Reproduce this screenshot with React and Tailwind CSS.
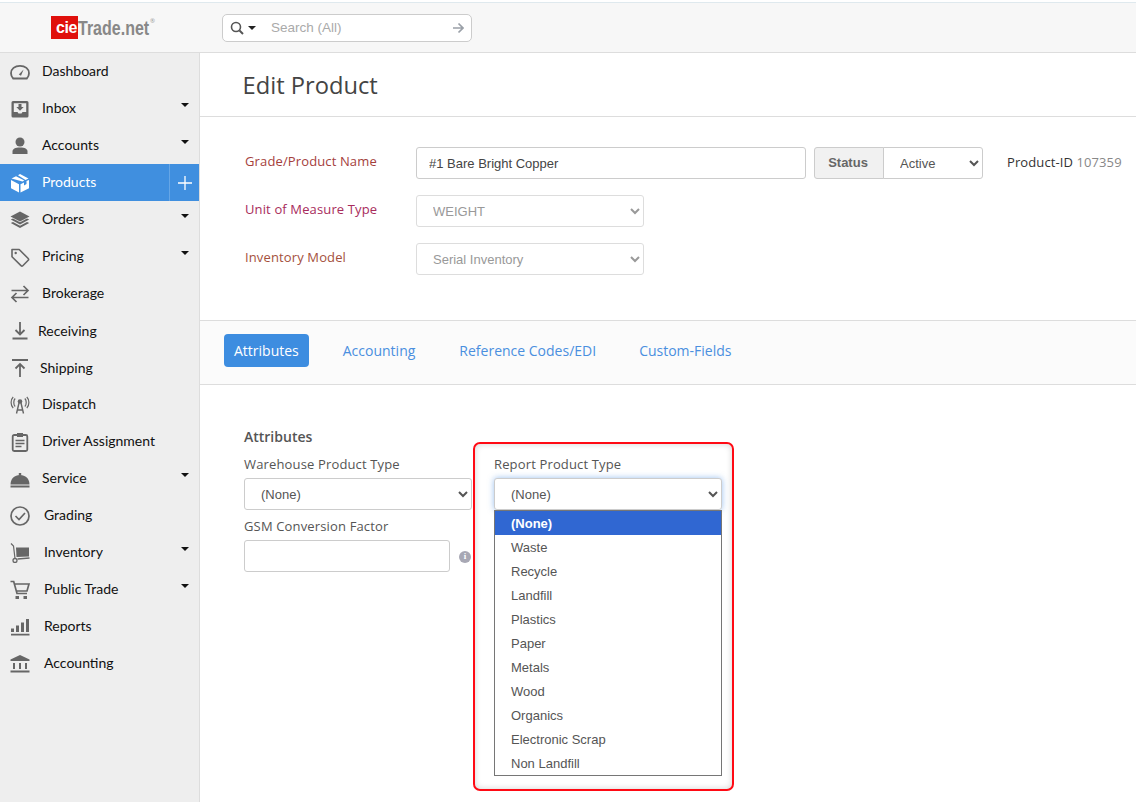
import React from "react";

const G = "#666666";
const Svg = ({ children }) => (
  <svg width="20" height="20" viewBox="0 0 20 20" fill="none" className="shrink-0">{children}</svg>
);
const icons = {
  dashboard: (
    <Svg>
      <path d="M3.2 16.5C1.900 15.200 1 13.300 1 11.200 1 7 4.800 3.800 10 3.800s9 3.200 9 7.400c0 2.100-.9 4-2.200 5.300z" stroke={G} strokeWidth="1.800" />
      <path d="M8.800 12.600 13.600 7.600 11 13.800z" fill={G} />
    </Svg>
  ),
  inbox: (
    <Svg>
      <path d="M3 2h14a1.500 1.500 0 0 1 1.500 1.500V17a1.500 1.500 0 0 1-1.500 1.500H3A1.500 1.500 0 0 1 1.500 17V3.500A1.500 1.500 0 0 1 3 2z" fill={G} />
      <path d="M3.800 4.300h12.400v8.700h-3.700l-1 1.500h-3l-1-1.500H3.800z" fill="#eeeeee" />
      <path d="M8.500 5h3v3h2.200L10 11.800 6.300 8h2.200z" fill={G} />
    </Svg>
  ),
  accounts: (
    <Svg>
      <circle cx="10" cy="6" r="4.500" fill={G} />
      <path d="M2.500 18v-2.500c0-2.500 2.500-4 7.500-4s7.500 1.500 7.500 4V18z" fill={G} />
    </Svg>
  ),
  products: (
    <Svg>
      <path d="M1.500 5.500 6 3.200l8.300 4.300-1.800 1zM8 2.200 10 1l8.500 4.500-3 1.500zM1 7l8 4.200V19.500L1 15.200zM19 7v8.200l-8.500 4.300v-8.300l3.500-1.800v3l2.500-1.300v-3z" fill="#ffffff" />
    </Svg>
  ),
  orders: (
    <Svg>
      <path d="M10 1.500 19.500 6.500 10 11.500.5 6.500z" fill={G} />
      <path d="M.8 9.500 3 8.500l7 3.800 7-3.800 2.200 1L10 14.500zM.8 13 3 12l7 3.800 7-3.800 2.200 1L10 18z" fill={G} />
    </Svg>
  ),
  pricing: (
    <Svg>
      <path d="M2 2.500h7.200l9 9a1.300 1.300 0 0 1 0 1.800l-5.400 5.400a1.300 1.300 0 0 1-1.800 0l-9-9z" stroke={G} strokeWidth="1.600" strokeLinejoin="round" />
      <circle cx="5.700" cy="6" r="1.200" fill={G} />
    </Svg>
  ),
  brokerage: (
    <Svg>
      <path d="M1.500 6.500h16.500M13.500 2 18 6.500 13.500 11M18.500 13.500H2M6.500 9 2 13.500 6.500 18" stroke={G} strokeWidth="1.700" />
    </Svg>
  ),
  receiving: (
    <Svg>
      <path d="M10 1v12M5.500 9 10 13.500 14.500 9M2.500 17.500h15" stroke={G} strokeWidth="1.800" />
    </Svg>
  ),
  shipping: (
    <Svg>
      <path d="M2 2h16M10 19V6.500M5.500 10.500 10 6l4.500 4.500" stroke={G} strokeWidth="1.800" />
    </Svg>
  ),
  dispatch: (
    <Svg>
      <path d="M5.200 3.500C3.300 5.300 3.300 9.700 5.200 11.500M3.200 2C.4 4.800.4 10.200 3.200 13M14.800 3.500c1.900 1.800 1.900 6.200 0 8M16.800 2c2.800 2.800 2.800 8.200 0 11" stroke={G} strokeWidth="1.200" />
      <circle cx="10" cy="6.500" r="2.300" fill={G} />
      <path d="M9 8 6.500 18.500M11 8 13.500 18.500M7.500 15h5" stroke={G} strokeWidth="1.400" />
    </Svg>
  ),
  driver: (
    <Svg>
      <rect x="2.700" y="3" width="14.600" height="16" rx="1.500" stroke={G} strokeWidth="1.800" />
      <path d="M7 1h6v4H7z" fill={G} />
      <path d="M5.500 8.500h9M5.500 11.500h9M5.500 14.500h6" stroke={G} strokeWidth="1.500" />
    </Svg>
  ),
  service: (
    <Svg>
      <path d="M.5 15.500C.7 9.500 4.500 6 10 6s9.300 3.500 9.500 9.500z" fill={G} />
      <rect x="8.800" y="4" width="2.400" height="2.500" fill={G} />
      <rect x=".5" y="16.500" width="19" height="2" fill={G} />
    </Svg>
  ),
  grading: (
    <Svg>
      <circle cx="10" cy="10" r="9" stroke={G} strokeWidth="1.700" />
      <path d="M5.500 10 9 13.500 15 7" stroke={G} strokeWidth="1.700" />
    </Svg>
  ),
  inventory: (
    <Svg>
      <path d="M1 .5 3.500 3l1.500 12.500" stroke={G} strokeWidth="1.200" />
      <path d="M6 4.500h13v9L6.500 14z" fill={G} />
      <path d="M7.500 16 19.500 15" stroke={G} strokeWidth="1.400" />
      <circle cx="5" cy="17.500" r="2" stroke={G} strokeWidth="1.300" />
    </Svg>
  ),
  trade: (
    <Svg>
      <path d="M.5 1.500h3.200L7 13.500h10M5 4h14l-2 7H7" stroke={G} strokeWidth="1.700" />
      <rect x="5.500" y="16" width="3.500" height="3" fill={G} />
      <rect x="13.500" y="16" width="3.500" height="3" fill={G} />
    </Svg>
  ),
  reports: (
    <Svg>
      <path d="M1 11.500h3V15H1zM6 8.500h3V15H6zM11 5.500h3V15h-3zM16 2h3v13h-3zM1 16.800h18.500v1.700H1z" fill={G} />
    </Svg>
  ),
  accounting: (
    <Svg>
      <path d="M10 1 19.500 5.500V7H.5V5.500z" fill={G} />
      <path d="M3 9h2v6H3zM9 9h2v6H9zM15 9h2v6h-2zM.5 16.500h19v2H.5z" fill={G} />
    </Svg>
  ),
};

const nav = [
  { t: "Dashboard", i: "dashboard", ml: "ml-3 pb-[2px]" },
  { t: "Inbox", i: "inbox", ml: "ml-3 pb-[2px]", c: true },
  { t: "Accounts", i: "accounts", ml: "ml-3 pb-[2px]", c: true },
  { t: "Products", i: "products", ml: "ml-3 pb-[2px]", a: true },
  { t: "Orders", i: "orders", ml: "ml-3 pb-[2px]", c: true },
  { t: "Pricing", i: "pricing", ml: "ml-3 pb-[2px]", c: true },
  { t: "Brokerage", i: "brokerage", ml: "ml-3 pb-[2px]" },
  { t: "Receiving", i: "receiving", ml: "ml-2" },
  { t: "Shipping", i: "shipping", ml: "ml-2.5" },
  { t: "Dispatch", i: "dispatch", ml: "ml-3 pb-[2px]" },
  { t: "Driver Assignment", i: "driver", ml: "ml-3 pb-[2px]" },
  { t: "Service", i: "service", ml: "ml-3 pb-[2px]", c: true },
  { t: "Grading", i: "grading", ml: "ml-3.5 pb-[2px]" },
  { t: "Inventory", i: "inventory", ml: "ml-3.5 pb-[2px]", c: true },
  { t: "Public Trade", i: "trade", ml: "ml-3.5 pb-[2px]", c: true },
  { t: "Reports", i: "reports", ml: "ml-3.5 pb-[2px]" },
  { t: "Accounting", i: "accounting", ml: "ml-3.5 pb-[2px]" },
];

const options = ["(None)", "Waste", "Recycle", "Landfill", "Plastics", "Paper", "Metals", "Wood", "Organics", "Electronic Scrap", "Non Landfill"];

const arial = "font-['Liberation_Sans',Arial,sans-serif]";
const selectCls = `h-8 w-[228px] rounded-[3px] border border-[#cccccc] bg-white pl-3 text-[13px] text-[#555555] ${arial}`;
const disabledCls = `h-8 w-[228px] rounded-[3px] border border-[#dddddd] bg-white pl-3 text-[13px] text-[#999999] opacity-100 ${arial}`;
const labelCls = "block text-[13px] leading-[18px] tracking-[0.15px] text-[#555555]";

function FormRow({ label, children, color }) {
  return (
    <div className="flex items-center h-8">
      <div className={`w-[171px] pb-[2px] text-[13px] tracking-[0.13px] ${color}`}>{label}</div>
      {children}
    </div>
  );
}

export default function App() {
  return (
    <div className="h-screen w-full overflow-hidden bg-white flex flex-col font-['Open_Sans',sans-serif]">
      <div className="h-[2px] bg-white shrink-0" />
      <header className="h-[51px] shrink-0 flex items-center bg-[#f7f7f7] border-t border-t-[#dfe9ee] border-b border-b-[#dddddd]">
        <div className="ml-[51px] w-[171px] flex items-center whitespace-nowrap">
          <div className={`flex items-center justify-end pr-[1px] w-[27px] h-[23px] bg-[#e0100c] text-white ${arial} font-bold text-[16px] tracking-[-0.4px] leading-none`}>cie</div>
          <div className="w-[72px]">
            <div className={`origin-left scale-x-[0.8] ${arial} font-bold text-[20px] text-[#888888] leading-none`}>Trade.net</div>
          </div>
          <div className="text-[6px] text-[#999999] -mt-3">®</div>
        </div>
        <div className="w-[250px] h-7 rounded-[5px] border border-[#cccccc] bg-white flex items-center pl-[7px] pr-[7px]">
          <svg width="14" height="14" viewBox="0 0 14 14" fill="none" className="shrink-0">
            <circle cx="6" cy="6" r="4.500" stroke="#555555" strokeWidth="1.600" />
            <path d="M9.500 9.500 13 13" stroke="#555555" strokeWidth="2" />
          </svg>
          <span className="ml-[4px] w-0 h-0 border-x-[4px] border-x-transparent border-t-[4px] border-t-[#222222]" />
          <span className={`ml-[15px] mt-[1px] text-[13.500px] text-[#aaaaaa] ${arial}`}>Search (All)</span>
          <svg width="12" height="12" viewBox="0 0 12 12" fill="none" className="ml-auto shrink-0">
            <path d="M1 6h10M6.500 1.500 11 6l-4.500 4.500" stroke="#9aa0a8" strokeWidth="1.700" />
          </svg>
        </div>
      </header>

      <div className="flex flex-1 min-h-0">
        <aside className="w-[200px] shrink-0 bg-[#eeeeee] border-r border-r-[#dddddd] font-['Lato',sans-serif]">
          {nav.map((n) =>
            n.a ? (
              <div key={n.t} className="h-[37px] flex items-center pl-[10px] bg-[#408fdf] text-white">
                {icons[n.i]}
                <span className={`${n.ml} text-[14px]`}>{n.t}</span>
                <div className="ml-auto h-full w-[30px] border-l border-l-[#66a6e6] flex items-center justify-center">
                  <svg width="14" height="14" viewBox="0 0 14 14" fill="none">
                    <path d="M7 0v14M0 7h14" stroke="#ffffff" strokeWidth="1.300" />
                  </svg>
                </div>
              </div>
            ) : (
              <div key={n.t} className="h-[37px] flex items-center pl-[10px] pr-[10px] text-[#111111]">
                {icons[n.i]}
                <span className={`${n.ml} text-[14px]`}>{n.t}</span>
                {n.c && <span className="ml-auto mb-[7px] w-0 h-0 border-x-[4px] border-x-transparent border-t-[4px] border-t-[#111111]" />}
              </div>
            )
          )}
        </aside>

        <main className="flex-1 min-w-0 relative">
          <div className="h-[64px] pl-[42.500px] pt-[2px] flex items-center border-b border-b-[#dddddd]">
            <h1 className="text-[23.700px] text-[#444444] leading-none">Edit Product</h1>
          </div>

          <div className="h-[204px] pl-[45px] pt-[30px] flex flex-col gap-4 border-b border-b-[#dddddd]">
            <FormRow label="Grade/Product Name" color="text-[#a4403c]">
              <input
                readOnly
                value="#1 Bare Bright Copper"
                className={`w-[390px] h-8 rounded-[3px] border border-[#cccccc] bg-white px-3 text-[13px] text-[#444444] ${arial}`}
              />
              <div className="ml-2 flex h-8">
                <span className={`w-[70px] pr-[2px] flex items-center justify-center rounded-l-[3px] border border-[#cccccc] bg-[#f1f1f1] text-[13px] font-bold text-[#666666] ${arial}`}>Status</span>
                <select defaultValue="Active" className={`w-[100px] h-8 -ml-px rounded-r-[3px] border border-[#cccccc] bg-white pl-3 text-[13px] text-[#555555] ${arial}`}>
                  <option>Active</option>
                </select>
              </div>
              <span className="ml-6 whitespace-nowrap text-[13px] tracking-[0.1px] text-[#333333]">
                Product-ID <span className="text-[#888888]">107359</span>
              </span>
            </FormRow>
            <FormRow label="Unit of Measure Type" color="text-[#a82c5c]">
              <select disabled defaultValue="WEIGHT" className={disabledCls}>
                <option>WEIGHT</option>
              </select>
            </FormRow>
            <FormRow label="Inventory Model" color="text-[#a4503c]">
              <select disabled defaultValue="Serial Inventory" className={disabledCls}>
                <option>Serial Inventory</option>
              </select>
            </FormRow>
          </div>

          <nav className="h-[64px] pl-[24px] pb-[4px] flex items-center gap-6 bg-[#fbfbfb] border-b border-b-[#dddddd] text-[14px] text-[#4a8fdf]">
            <span className="h-[33px] px-2.5 flex items-center rounded-[4px] bg-[#3d8de0] text-white">Attributes</span>
            <span className="px-2.5">Accounting</span>
            <span className="px-2.5">Reference Codes/EDI</span>
            <span className="px-2.5 -ml-[1px]">Custom-Fields</span>
          </nav>

          <section className="pl-[44px] pt-[42px]">
            <h2 className="text-[14px] leading-[20px] font-semibold text-[#555555]">Attributes</h2>
            <div className="flex gap-[22px]">
              <div className="w-[228px]">
                <label className={`${labelCls} mt-[8px] mb-[5px]`}>Warehouse Product Type</label>
                <select defaultValue="(None)" className={selectCls}>
                  <option>(None)</option>
                </select>
                <label className={`${labelCls} mt-[7px] mb-[5px]`}>GSM Conversion Factor</label>
                <div className="flex items-center">
                  <input readOnly className="w-[206px] h-8 rounded-[3px] border border-[#cccccc] bg-white" />
                  <span className="ml-[9px] mt-[1px] w-3 h-3 rounded-full bg-[#a8a8b4] text-white text-[9px] font-bold flex items-center justify-center leading-none font-['Liberation_Serif',serif]">i</span>
                </div>
              </div>
              <div className="w-[228px] relative">
                <label className={`${labelCls} mt-[8px] mb-[5px]`}>Report Product Type</label>
                <select defaultValue="(None)" className={`${selectCls} border-[#5b9de0] shadow-[0_0_6px_rgba(70,140,225,0.55)]`}>
                  <option>(None)</option>
                </select>
                <div className={`absolute left-0 top-[63px] z-10 w-[228px] border border-[#767676] bg-white text-[13px] text-[#555555] ${arial}`}>
                  {options.map((o, i) => (
                    <div key={o} className={i === 0 ? "h-6 pl-4 pt-[2px] flex items-center bg-[#3067d2] text-white font-bold" : "h-6 pl-4 pt-[2px] flex items-center"}>{o}</div>
                  ))}
                </div>
              </div>
            </div>
          </section>

          <div className="absolute left-[273px] top-[389px] w-[261px] h-[349px] z-20 rounded-[7px] border-2 border-[#ff0a14] shadow-[inset_0_0_6px_rgba(0,0,0,0.18)] pointer-events-none" />
        </main>
      </div>
    </div>
  );
}
